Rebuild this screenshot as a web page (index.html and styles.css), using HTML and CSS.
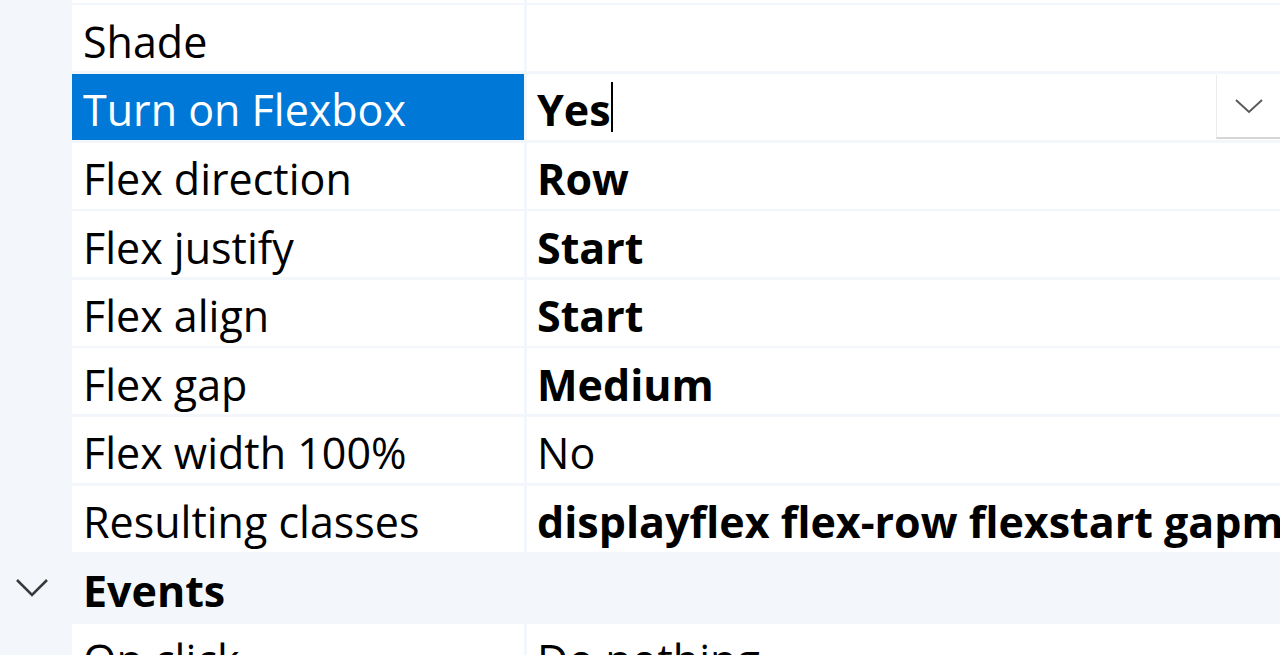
FILE: index.html
```html
<html>
<head>
<title>Properties</title>
<link rel="stylesheet" href="styles.css">
</head>
<body>
<div class="grid">
    <div class="row stub"><div class="gut"></div><div class="name"></div><div class="val"></div></div>
    <div class="row"><div class="gut"></div><div class="name">Shade</div><div class="val"></div></div>
    <div class="row"><div class="gut"></div><div class="name sel">Turn on Flexbox</div>
        <div class="val edit"><b>Yes</b><span class="caret"></span>
            <div class="drop"><svg width="30" height="16" viewBox="0 0 30 16"><path d="M2 2 L15 14 L28 2" fill="none" stroke="#5a5a5a" stroke-width="2"/></svg></div>
        </div>
    </div>
    <div class="row"><div class="gut"></div><div class="name">Flex direction</div><div class="val"><b>Row</b></div></div>
    <div class="row"><div class="gut"></div><div class="name">Flex justify</div><div class="val"><b>Start</b></div></div>
    <div class="row"><div class="gut"></div><div class="name">Flex align</div><div class="val"><b>Start</b></div></div>
    <div class="row"><div class="gut"></div><div class="name">Flex gap</div><div class="val"><b>Medium</b></div></div>
    <div class="row"><div class="gut"></div><div class="name">Flex width 100%</div><div class="val">No</div></div>
    <div class="row"><div class="gut"></div><div class="name">Resulting classes</div><div class="val"><b>displayflex flex-row flexstart gapmedium</b></div></div>
    <div class="row cat">
        <div class="gut"><svg width="36" height="22" viewBox="0 0 36 22"><path d="M3 3 L18 18 L33 3" fill="none" stroke="#3a3a3a" stroke-width="2.6"/></svg></div>
        <div class="name">Events</div>
    </div>
    <div class="row"><div class="gut"></div><div class="name">On click</div><div class="val">Do nothing</div></div>
</div>
</body>
</html>
```

FILE: styles.css
```css
body{margin:0;padding:0;background:#f3f6fb;font-family:"Open Sans","Noto Sans",sans-serif;color:#000;overflow:hidden;}
.grid{display:flex;flex-direction:column;gap:2.6px;}
.row{display:flex;height:66px;gap:3px;font-size:43px;flex:none;}
.row.stub{height:2.8px;}
.gut{width:72px;flex:none;margin-right:-3px;display:flex;align-items:center;justify-content:center;}
.name{width:441px;flex:none;background:#fff;padding-left:11px;padding-top:6px;box-sizing:border-box;width:452px;display:flex;align-items:center;white-space:nowrap;overflow:hidden;}
.val{flex:1;background:#fff;padding-left:10px;padding-top:6px;box-sizing:border-box;display:flex;align-items:center;white-space:nowrap;overflow:hidden;position:relative;}
.row.stub .name,.row.stub .val{padding-top:0;}
.val b,.cat .name{font-weight:700;}
.name.sel{background:#0078d7;color:#fff;}
.caret{display:inline-block;width:2px;height:50px;background:#000;margin-top:-5px;}
.drop{position:absolute;right:0;top:1px;width:63px;height:62px;border-left:1px solid #ececec;border-bottom:2px solid #d6d6d6;background:#fff;display:flex;align-items:center;justify-content:center;}
.cat{height:68px;margin-top:-1px;}
.cat .name{background:none;}
.cat .gut{padding-top:2px;margin-left:-4px;margin-right:1px;}
```
